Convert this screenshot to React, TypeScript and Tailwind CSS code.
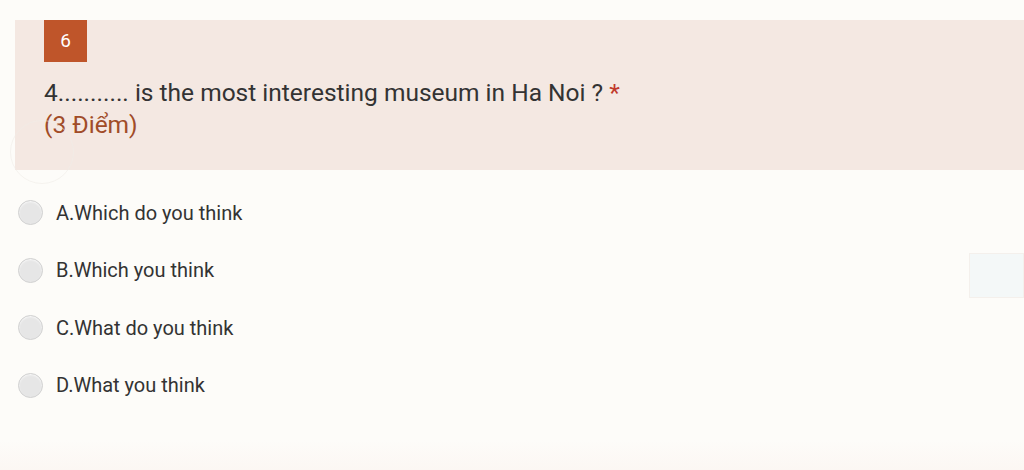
import React from "react";

const options = [
  "A.Which do you think",
  "B.Which you think",
  "C.What do you think",
  "D.What you think",
];

export default function App(): JSX.Element {
  return (
    <main
      className="relative w-[1024px] h-[470px] overflow-hidden bg-[#fdfcf9] pt-5"
      style={{ fontFamily: "Roboto, 'Noto Sans', sans-serif" }}
    >
      {/* question header */}
      <section className="ml-[15px] h-[150px] bg-[#f4e8e2] pl-[29px]">
        <div className="flex h-[42px] w-[43px] items-center justify-center bg-[#bf552a] text-[19px] text-white">
          6
        </div>
        <div className="mt-[15px] text-[24.5px] leading-8 text-[#333333]">
          4........... is the most interesting museum in Ha Noi ?{" "}
          <span className="text-[#c0392b]">*</span>
        </div>
        <div className="text-[24.5px] leading-8 text-[#a14c28]">(3 Điểm)</div>
      </section>

      {/* answer choices */}
      <section className="mt-[30px] flex flex-col gap-[32.5px] pl-[18px]">
        {options.map((label) => (
          <label key={label} className="flex h-[25px] items-center">
            <span className="h-[25px] w-[25px] rounded-full border border-[#d2d2d2] bg-[#e6e6e6] shadow-[inset_0_1px_2px_rgba(255,255,255,0.8)]" />
            <span className="ml-[13px] text-[20px] text-[#333333]">{label}</span>
          </label>
        ))}
      </section>

      {/* faint background decoration */}
      <div className="absolute left-[10px] top-[120px] h-[64px] w-[64px] rounded-full border border-[#f0ece8] opacity-60" />
      <div className="absolute right-0 top-[253px] h-[45px] w-[55px] border border-[#f4f0ec] bg-[#f4f8f8]" />
      <div className="absolute inset-x-0 bottom-0 h-[30px] bg-gradient-to-b from-[#fdfcf9] to-[#fcf7f3]" />
    </main>
  );
}
